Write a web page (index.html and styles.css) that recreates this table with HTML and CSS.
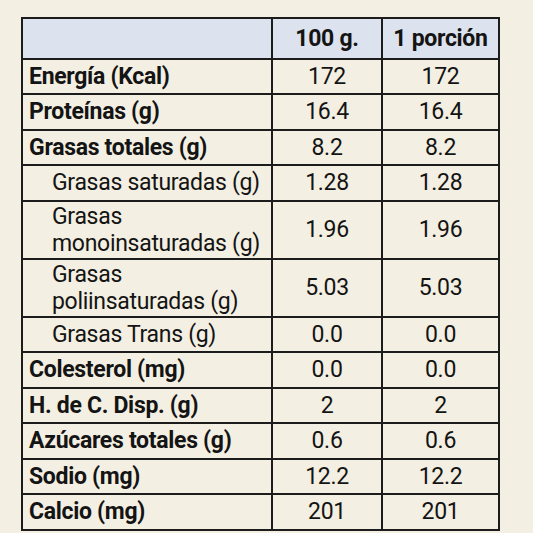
FILE: index.html
```html
<!DOCTYPE html>
<html lang="es">
<head>
    <meta charset="UTF-8">
    <meta name="viewport" content="width=device-width, initial-scale=1.0">
    <title>Información nutricional</title>
    <link rel="stylesheet" href="styles.css">
</head>
<body>
    <table class="nutri">
        <colgroup>
            <col class="col-name">
            <col class="col-val">
            <col class="col-por">
        </colgroup>
        <thead>
            <tr class="head">
                <th></th>
                <th>100 g.</th>
                <th>1 porción</th>
            </tr>
        </thead>
        <tbody>
            <tr class="r1"><td class="name">Energía (Kcal)</td><td>172</td><td>172</td></tr>
            <tr class="r1"><td class="name">Proteínas (g)</td><td>16.4</td><td>16.4</td></tr>
            <tr class="r1"><td class="name">Grasas totales (g)</td><td>8.2</td><td>8.2</td></tr>
            <tr class="r1"><td class="name sub">Grasas saturadas (g)</td><td>1.28</td><td>1.28</td></tr>
            <tr class="r2"><td class="name sub">Grasas<br>monoinsaturadas (g)</td><td>1.96</td><td>1.96</td></tr>
            <tr class="r2"><td class="name sub">Grasas<br>poliinsaturadas (g)</td><td>5.03</td><td>5.03</td></tr>
            <tr class="r1"><td class="name sub">Grasas Trans (g)</td><td>0.0</td><td>0.0</td></tr>
            <tr class="r1"><td class="name">Colesterol (mg)</td><td>0.0</td><td>0.0</td></tr>
            <tr class="r1"><td class="name">H. de C. Disp. (g)</td><td>2</td><td>2</td></tr>
            <tr class="r1"><td class="name">Azúcares totales (g)</td><td>0.6</td><td>0.6</td></tr>
            <tr class="r1"><td class="name">Sodio (mg)</td><td>12.2</td><td>12.2</td></tr>
            <tr class="r1"><td class="name">Calcio (mg)</td><td>201</td><td>201</td></tr>
        </tbody>
    </table>
</body>
</html>
```

FILE: styles.css
```css
html, body { margin: 0; background-color: #f3efe2; }
body { padding: 17px 0 0 21px; font-family: Roboto, "Liberation Sans", sans-serif; color: #141414; }
.nutri { border-collapse: collapse; width: 477px; table-layout: fixed; font-size: 23px; line-height: 27px; letter-spacing: -0.3px; }
.col-name { width: 250px; }
.col-val { width: 110px; }
.col-por { width: 117px; }
.nutri th, .nutri td { border: 2px solid #1c1c1c; padding: 0 4px; text-align: center; }
.nutri th { font-weight: bold; height: 38.5px; }
.head { background-color: #dce2ee; }
.r1 td { height: 33.5px; }
.r2 td { height: 56px; }
.name { text-align: left !important; font-weight: bold; padding-left: 6px !important; }
.name.sub { font-weight: normal; padding-left: 29px !important; }
```
